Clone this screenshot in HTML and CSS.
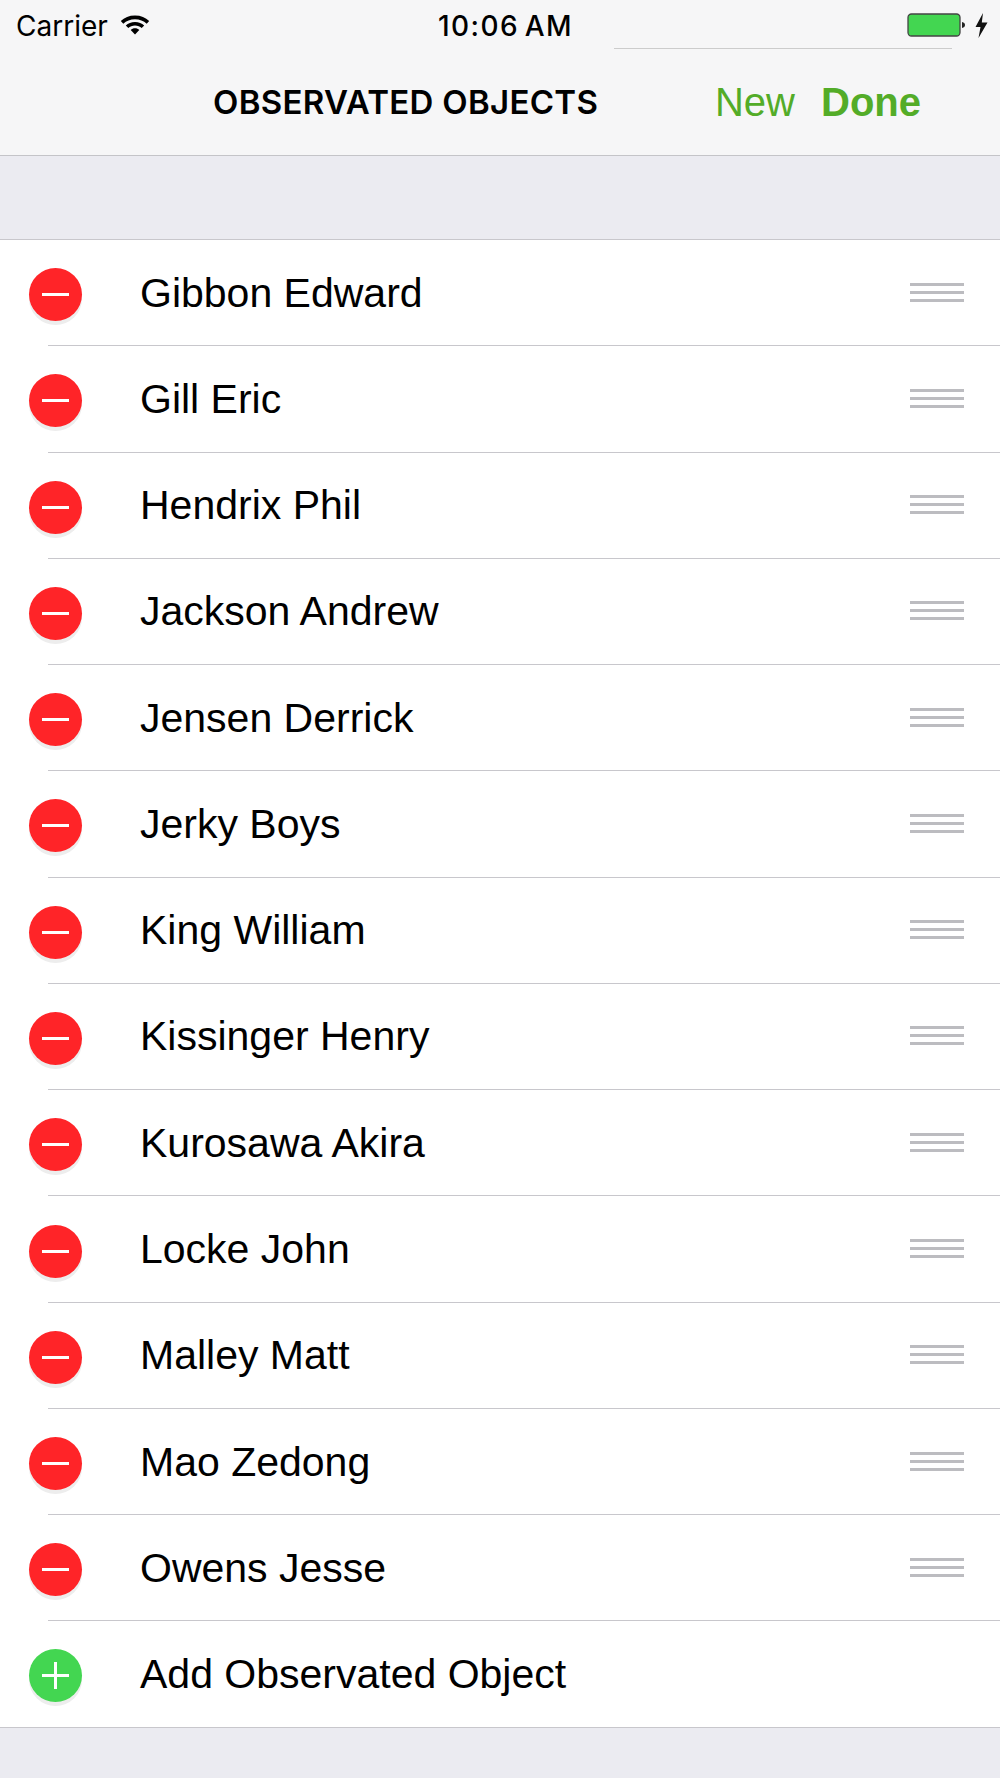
FILE: index.html
```html
<!DOCTYPE html>
<html lang="en">

<head>
  <meta charset="UTF-8">
  <meta name="viewport" content="width=device-width, initial-scale=1.0">
  <title>Observated Objects</title>
  <link rel="stylesheet" href="styles.css">
</head>

<body>
  <header class="top">
    <div class="status">
      <div class="status-left">
        <span class="carrier">Carrier</span>
        <svg class="wifi" width="32" height="24" viewBox="0 0 32 24">
          <path d="M16 3.500C10 3.500 5.500 5.500 1.800 9L4.300 11.700C7.400 8.800 11.400 7.200 16 7.200S24.600 8.800 27.700 11.700L30.200 9C26.500 5.500 22 3.500 16 3.500Z" />
          <path d="M16 10C12.200 10 9.200 11.200 6.800 13.500L9.300 16.100C11 14.500 13.300 13.600 16 13.600S21 14.500 22.700 16.100L25.200 13.500C22.800 11.200 19.800 10 16 10Z" />
          <path d="M16 16.300C14.300 16.300 12.800 16.900 11.700 17.900L16 22.500L20.300 17.900C19.200 16.900 17.700 16.300 16 16.300Z" />
        </svg>
      </div>
      <div class="time">10:06 AM</div>
      <div class="status-right">
        <svg width="87" height="28" viewBox="0 0 87 28">
          <rect x="1" y="2" width="52" height="22" rx="3.500" fill="#43d651" stroke="#444" stroke-width="1.300" />
          <path d="M55 10C57 10.300 58 11.500 58 13S57 15.700 55 16Z" fill="#222" />
          <path d="M76 1L68.500 15H73.500L71.500 26L80.500 10.500H74.800Z" fill="#111" />
        </svg>
      </div>
    </div>
    <nav class="nav">
      <div class="nav-line"></div>
      <div class="nav-title">OBSERVATED OBJECTS</div>
      <div class="nav-actions">
        <span class="btn">New</span>
        <span class="btn btn-done">Done</span>
      </div>
    </nav>
  </header>

  <div class="band"></div>

  <ul class="list">
    <li class="row"><span class="circle minus"></span><span class="name">Gibbon Edward</span><span class="grip"></span></li>
    <li class="row"><span class="circle minus"></span><span class="name">Gill Eric</span><span class="grip"></span></li>
    <li class="row"><span class="circle minus"></span><span class="name">Hendrix Phil</span><span class="grip"></span></li>
    <li class="row"><span class="circle minus"></span><span class="name">Jackson Andrew</span><span class="grip"></span></li>
    <li class="row"><span class="circle minus"></span><span class="name">Jensen Derrick</span><span class="grip"></span></li>
    <li class="row"><span class="circle minus"></span><span class="name">Jerky Boys</span><span class="grip"></span></li>
    <li class="row"><span class="circle minus"></span><span class="name">King William</span><span class="grip"></span></li>
    <li class="row"><span class="circle minus"></span><span class="name">Kissinger Henry</span><span class="grip"></span></li>
    <li class="row"><span class="circle minus"></span><span class="name">Kurosawa Akira</span><span class="grip"></span></li>
    <li class="row"><span class="circle minus"></span><span class="name">Locke John</span><span class="grip"></span></li>
    <li class="row"><span class="circle minus"></span><span class="name">Malley Matt</span><span class="grip"></span></li>
    <li class="row"><span class="circle minus"></span><span class="name">Mao Zedong</span><span class="grip"></span></li>
    <li class="row"><span class="circle minus"></span><span class="name">Owens Jesse</span><span class="grip"></span></li>
    <li class="row row-add"><span class="circle plus"></span><span class="name">Add Observated Object</span></li>
  </ul>
</body>

</html>
```

FILE: styles.css
```css
html,
body {
  margin: 0;
  height: 100%;
}

body {
  background: #ebebf1;
  color: #000;
  font-family: "Liberation Sans", sans-serif;
  overflow: hidden;
}

.top {
  background: #f6f6f7;
  border-bottom: 1px solid #c4c4c8;
  height: 155px;
}

.status {
  display: grid;
  grid-template-columns: 1fr auto 1fr;
  align-items: center;
  height: 48px;
  padding: 0 6px 0 16px;
}

.status-left {
  display: flex;
  align-items: center;
  gap: 11px;
  font: 28px "Inter", sans-serif;
}

.carrier {
  padding-top: 3px;
}

.wifi {
  fill: #000;
}

.time {
  padding: 3px 0 0 1px;
  font: 500 28px "Inter", sans-serif;
  letter-spacing: 1.4px;
  word-spacing: -3px;
}

.status-right {
  display: flex;
  justify-content: flex-end;
  padding-top: 4px;
}

.nav {
  position: relative;
  display: flex;
  align-items: center;
  height: 106px;
  padding: 0 79px 0 213px;
}

.nav-line {
  position: absolute;
  top: 0;
  left: 614px;
  width: 338px;
  height: 1px;
  background: #ccc;
}

.nav-title {
  font: 600 33px "Inter", sans-serif;
  letter-spacing: .3px;
  padding-top: 2px;
}

.nav-actions {
  display: flex;
  gap: 26px;
  margin-left: auto;
  padding-top: 3px;
  color: #53ac28;
  font-size: 40px;
}

.btn-done {
  font-weight: bold;
}

.band {
  height: 83px;
  border-bottom: 1px solid #c8c7cc;
}

.list {
  margin: 0;
  padding: 0;
  list-style: none;
  background: #fff;
  border-bottom: 1px solid #c8c7cc;
}

.row {
  position: relative;
  display: flex;
  align-items: center;
  height: 106.28px;
  padding: 0 36px 0 29px;
  box-sizing: border-box;
}

.row::after {
  content: "";
  position: absolute;
  left: 48px;
  right: 0;
  bottom: 0;
  height: 1px;
  background: #c8c7cc;
}

.row-add {
  height: 105.28px;
}

.row-add::after {
  display: none;
}

.circle {
  position: relative;
  flex: none;
  width: 53px;
  height: 53px;
  margin-top: 3px;
  border-radius: 50%;
  box-shadow: 0 4px 0 #ededed;
}

.minus {
  background: #ff2428;
}

.plus {
  background: #43d651;
}

.circle::before,
.plus::after {
  content: "";
  position: absolute;
  left: 13px;
  top: 25px;
  width: 27px;
  height: 3px;
  background: #fff;
}

.plus::after {
  left: 25px;
  top: 13px;
  width: 3px;
  height: 27px;
}

.name {
  flex: 1;
  margin-left: 58px;
  font-size: 41px;
}

.grip {
  flex: none;
  width: 54px;
  height: 19px;
  margin-top: -2px;
  background: linear-gradient(#bcbcc0 3px, transparent 3px) 0 0 / 100% 8px;
}
```
